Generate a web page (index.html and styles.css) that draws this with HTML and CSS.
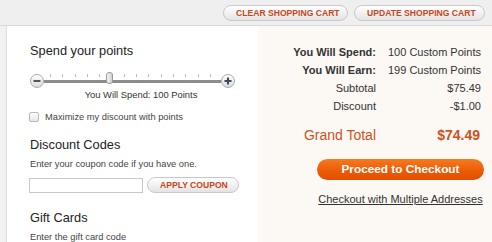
FILE: index.html
```html
<!DOCTYPE html>
<html>
<head>
<meta charset="utf-8">
<link rel="stylesheet" href="styles.css">
</head>
<body>
<div class="topbar">
  <button class="pill">CLEAR SHOPPING CART</button>
  <button class="pill">UPDATE SHOPPING CART</button>
</div>
<div class="main">
  <div class="edge"></div>
  <div class="left">
    <h2 class="heading h-first">Spend your points</h2>
    <div class="slider">
      <span class="knob">
        <svg width="14" height="14" viewBox="0 0 14 14"><rect x="3.5" y="6" width="7" height="2" fill="#555"/></svg>
      </span>
      <div class="track">
        <span class="handle" style="left:62px"></span>
      </div>
      <span class="knob">
        <svg width="14" height="14" viewBox="0 0 14 14"><rect x="3.5" y="6" width="7" height="2" fill="#3d4a5c"/><rect x="6" y="3.5" width="2" height="7" fill="#3d4a5c"/></svg>
      </span>
    </div>
    <div class="spend-note">You Will Spend: 100 Points</div>
    <label class="check"><span class="box"></span>Maximize my discount with points</label>
    <h2 class="heading h-disc">Discount Codes</h2>
    <p class="hint">Enter your coupon code if you have one.</p>
    <div class="coupon">
      <input class="code" type="text">
      <button class="pill apply">APPLY COUPON</button>
    </div>
    <h2 class="heading h-gift">Gift Cards</h2>
    <p class="hint">Enter the gift card code</p>
  </div>
  <div class="right">
    <div class="totals">
      <span class="lab strong">You Will Spend:</span><span class="val">100 Custom Points</span>
      <span class="lab strong">You Will Earn:</span><span class="val">199 Custom Points</span>
      <span class="lab">Subtotal</span><span class="val">$75.49</span>
      <span class="lab">Discount</span><span class="val">-$1.00</span>
    </div>
    <div class="grand">
      <span class="lab">Grand Total</span><span class="val">$74.49</span>
    </div>
    <div class="actions">
      <button class="checkout">Proceed to Checkout</button>
      <a class="multi" href="#">Checkout with Multiple Addresses</a>
    </div>
  </div>
</div>
</body>
</html>
```
FILE: styles.css
```css
* { box-sizing: border-box; }
html, body { margin: 0; padding: 0; }
body {
  width: 492px;
  height: 242px;
  overflow: hidden;
  font-family: "Liberation Sans", Arial, sans-serif;
  color: #333;
  background: #fff;
}
.topbar {
  height: 26px;
  background: #efefef;
  border-bottom: 1px solid #d9d9d9;
  display: flex;
  justify-content: flex-end;
  align-items: flex-start;
  gap: 6px;
  padding: 5px 7px 0 0;
}
.pill {
  height: 16px;
  padding: 0 12px;
  border: 1px solid #c9c9c9;
  border-radius: 9px;
  background: linear-gradient(#ffffff, #e4e4e4);
  color: #c6461b;
  font-family: "Liberation Sans", Arial, sans-serif;
  font-weight: bold;
  font-size: 8.6px;
  line-height: 14px;
  white-space: nowrap;
}
.topbar .pill:first-child { width: 125px; }
.topbar .pill:last-child { width: 131px; }
.main {
  display: flex;
  height: 216px;
}
.edge {
  flex: none;
  width: 7px;
  background: #f3f1ef;
  border-right: 1px solid #e1ddd9;
}
.left {
  flex: none;
  width: 251px;
  padding: 17px 0 0 23px;
  background: #fff;
}
.heading {
  margin: 0;
  font-size: 12.8px;
  font-weight: normal;
  line-height: 15px;
  color: #222;
}
.slider {
  margin-top: 16px;
  display: flex;
  align-items: center;
  width: 205px;
  height: 14px;
}
.knob {
  width: 14px;
  height: 14px;
  flex: none;
  border-radius: 50%;
  border: 1px solid #a9a9a9;
  background: linear-gradient(#ffffff, #dcdcdc);
  display: flex;
  align-items: center;
  justify-content: center;
}
.knob svg { display: block; margin: -1px; }
.track {
  flex: 1;
  height: 3px;
  background: #8c8c8c;
  position: relative;
}
.track::before {
  content: "";
  position: absolute;
  left: 6px;
  right: 4px;
  top: -6px;
  height: 3px;
  background: repeating-linear-gradient(90deg, #b8b8b8 0 1px, transparent 1px 12.3px);
}
.handle {
  position: absolute;
  top: -8px;
  width: 7px;
  height: 12px;
  border: 1px solid #9a9a9a;
  border-radius: 3px;
  background: linear-gradient(90deg, #f4f4f4, #cfcfcf);
}
.spend-note {
  margin-top: 1px;
  width: 222px;
  text-align: center;
  font-size: 9.4px;
  line-height: 12px;
  color: #333;
}
.check {
  margin-top: 10px;
  display: flex;
  align-items: center;
  gap: 6px;
  margin-left: -1px;
  font-size: 9.3px;
  line-height: 12px;
  color: #444;
}
.box {
  width: 10px;
  height: 10px;
  border: 1px solid #b9b9b9;
  border-radius: 2px;
  background: linear-gradient(#fdfdfd, #e6e6e6);
}
.h-disc { margin-top: 14px; }
.h-gift { margin-top: 17px; }
.hint {
  margin: 6px 0 0;
  font-size: 9.3px;
  line-height: 12px;
  color: #444;
}
.coupon {
  margin-top: 7px;
  display: flex;
  align-items: flex-start;
  gap: 4px;
  margin-left: -1px;
}
.code {
  width: 114px;
  height: 15px;
  margin: 1px 0 0;
  border: 1px solid #c8c8c8;
  padding: 0;
  background: #fff;
}
.apply { width: 92px; }
.right {
  flex: 1;
  min-width: 0;
  background: #fcf8f4;
  padding: 17px 12px 0 0;
  display: flex;
  flex-direction: column;
}
.totals, .grand {
  display: grid;
  grid-template-columns: 118px 1fr;
  column-gap: 12px;
}
.totals {
  font-size: 11px;
  line-height: 18px;
  color: #333;
}
.lab { text-align: right; white-space: nowrap; }
.val { text-align: right; white-space: nowrap; }
.strong { font-weight: bold; }
.grand {
  margin-top: 11px;
  font-size: 14px;
  line-height: 18px;
  color: #cf511d;
}
.grand .val { font-weight: bold; }
.actions {
  margin: 15px 0 0 59px;
  width: 167px;
  display: flex;
  flex-direction: column;
  align-items: center;
}
.checkout {
  flex: none;
  width: 167px;
  height: 21px;
  border: none;
  border-radius: 11px;
  background: linear-gradient(#f77a1e, #ea5a06 60%, #e04f00);
  color: #fff;
  font-family: "Liberation Sans", Arial, sans-serif;
  font-weight: bold;
  font-size: 11.8px;
  line-height: 21px;
  padding: 0;
}
.multi {
  margin-top: 13px;
  font-size: 11px;
  line-height: 13px;
  color: #333;
  text-decoration: underline;
  white-space: nowrap;
}
```
